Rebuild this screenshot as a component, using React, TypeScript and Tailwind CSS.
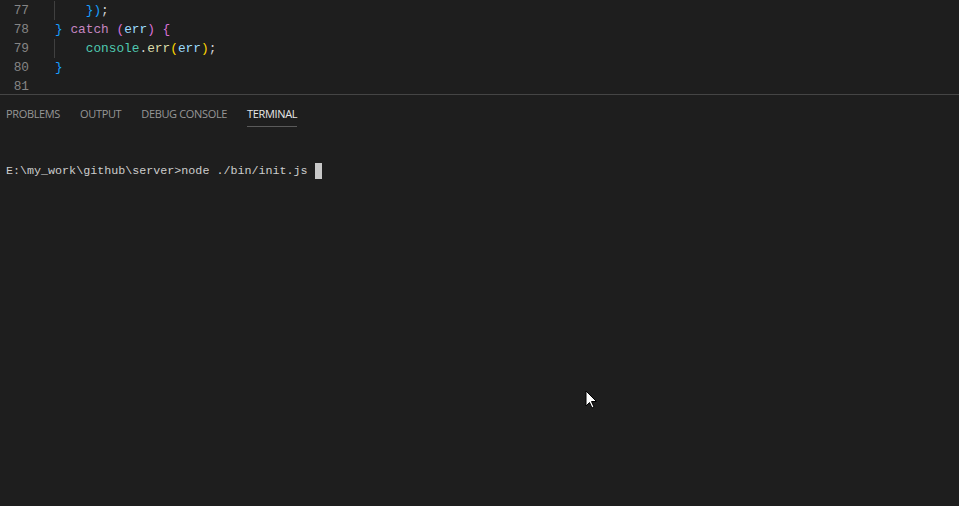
import React from 'react'

const MONO = { fontFamily: '"Liberation Mono", "DejaVu Sans Mono", monospace' }

type Tok = [string, string]

const LINES: { n: number; guide: boolean; toks: Tok[] }[] = [
  { n: 77, guide: true, toks: [['    ', ''], ['}', 'text-[#179fff]'], [')', 'text-[#179fff]'], [';', 'text-[#d4d4d4]']] },
  {
    n: 78,
    guide: false,
    toks: [
      ['}', 'text-[#179fff]'],
      [' ', ''],
      ['catch', 'text-[#c586c0]'],
      [' ', ''],
      ['(', 'text-[#da70d6]'],
      ['err', 'text-[#9cdcfe]'],
      [')', 'text-[#da70d6]'],
      [' ', ''],
      ['{', 'text-[#da70d6]'],
    ],
  },
  {
    n: 79,
    guide: true,
    toks: [
      ['    ', ''],
      ['console', 'text-[#4ec9b0]'],
      ['.', 'text-[#d4d4d4]'],
      ['err', 'text-[#dcdcaa]'],
      ['(', 'text-[#ffd700]'],
      ['err', 'text-[#9cdcfe]'],
      [')', 'text-[#ffd700]'],
      [';', 'text-[#d4d4d4]'],
    ],
  },
  { n: 80, guide: false, toks: [['}', 'text-[#179fff]']] },
  { n: 81, guide: false, toks: [] },
]

const TABS = ['PROBLEMS', 'OUTPUT', 'DEBUG CONSOLE', 'TERMINAL']

export default function App() {
  return (
    <div className="relative w-[959px] h-[506px] overflow-hidden bg-[#1e1e1e] flex flex-col">
      {/* editor tail */}
      <div className="h-[94px] pt-[1px] text-[12.8px]" style={MONO}>
        {LINES.map((l) => (
          <div key={l.n} className="flex h-[19px] items-center leading-[19px]">
            <div className="w-[29px] text-right text-[#858585]">{l.n}</div>
            <div className="w-[25px]" />
            <div className={`w-px h-[19px] ${l.guide ? 'bg-[#404040]' : ''}`} />
            <div className="whitespace-pre">
              {l.toks.map(([t, c], i) => (
                <span key={i} className={c}>
                  {t}
                </span>
              ))}
            </div>
          </div>
        ))}
      </div>

      {/* panel */}
      <div className="border-t border-[#454545] flex-1">
        <div className="flex gap-[20px] pl-[6px] h-[32px] items-start">
          {TABS.map((t) => (
            <div
              key={t}
              className={`h-[32px] pt-[12px] text-[11px] leading-[13px] tracking-[-0.35px] ${
                t === 'TERMINAL' ? 'text-[#e7e7e7] border-b border-[#5a5a5a]' : 'text-[#969696]'
              }`}
              style={{ fontFamily: '"Open Sans", "Noto Sans", sans-serif' }}
            >
              {t}
            </div>
          ))}
        </div>
        <div className="pt-[36px] pl-[6px] flex items-center text-[11.7px] text-[#cccccc] leading-[16px]" style={MONO}>
          <span className="whitespace-pre">{'E:\\my_work\\github\\server>node ./bin/init.js '}</span>
          <span className="inline-block w-[7px] h-[16px] bg-[#c8c8c8]" />
        </div>
      </div>

      {/* mouse pointer */}
      <svg className="absolute left-[585px] top-[390px]" width="13" height="20" viewBox="0 0 13 20">
        <path d="M1 1 L1 16 L4.5 12.5 L7 18 L9 17 L6.5 11.5 L11.5 11.5 Z" fill="#fff" stroke="#000" strokeWidth="1" />
      </svg>
    </div>
  )
}
